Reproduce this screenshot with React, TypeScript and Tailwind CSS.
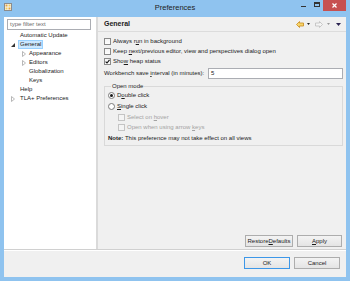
import React from 'react';

type Level = 0 | 1;

interface TreeItem {
  label: string;
  level: Level;
  arrow?: 'open' | 'closed';
  selected?: boolean;
}

const tree: TreeItem[] = [
  { label: 'Automatic Update', level: 0 },
  { label: 'General', level: 0, arrow: 'open', selected: true },
  { label: 'Appearance', level: 1, arrow: 'closed' },
  { label: 'Editors', level: 1, arrow: 'closed' },
  { label: 'Globalization', level: 1 },
  { label: 'Keys', level: 1 },
  { label: 'Help', level: 0 },
  { label: 'TLA+ Preferences', level: 0, arrow: 'closed' },
];

function Checkbox({ checked, disabled }: { checked?: boolean; disabled?: boolean }) {
  return (
    <span
      className={`w-[7px] h-[7px] shrink-0 border flex items-center justify-center ${
        disabled ? 'border-[#c4c4c4] bg-[#f4f4f4]' : 'border-[#8a8a8a] bg-gradient-to-b from-[#f4f4f4] to-white'
      }`}
    >
      {checked && (
        <svg width="5" height="5" viewBox="0 0 5 5">
          <path d="M0.6 2.6 L2 4 L4.5 0.8" stroke="#111" strokeWidth="1.1" fill="none" />
        </svg>
      )}
    </span>
  );
}

function Radio({ checked }: { checked?: boolean }) {
  return (
    <span className="w-[7px] h-[7px] shrink-0 rounded-full border border-[#7a7a7a] bg-white flex items-center justify-center">
      {checked && <span className="w-[3px] h-[3px] rounded-full bg-[#1a1a1a]" />}
    </span>
  );
}

function Btn({ children, className = '', isDefault }: { children: React.ReactNode; className?: string; isDefault?: boolean }) {
  return (
    <div
      className={`h-[12px] flex items-center justify-center text-[6px] bg-gradient-to-b from-[#f3f3f3] to-[#e4e4e4] border ${
        isDefault ? 'border-[#3d97e8]' : 'border-[#adadad]'
      } ${className}`}
    >
      {children}
    </div>
  );
}

function TitleBar() {
  return (
    <div className="h-[17px] grid grid-cols-[1fr_auto_1fr] items-start">
      <div className="pl-[4px] pt-[3px]">
        {/* eclipse prefs icon */}
        <svg width="8" height="8" viewBox="0 0 8 8">
          <rect x="0.5" y="0.5" width="7" height="7" fill="#f4f4f4" stroke="#8c8c8c" />
          <rect x="1.5" y="1.5" width="2" height="2" fill="#e8a33c" />
          <rect x="4.5" y="1.5" width="2" height="2" fill="#f3cf5a" />
          <rect x="1.5" y="4.5" width="2" height="2" fill="#f3cf5a" />
          <rect x="4.5" y="4.5" width="2" height="2" fill="#e8a33c" />
        </svg>
      </div>
      <div className="pt-[3px] text-[7.5px] leading-[10px] text-[#222]">Preferences</div>
      <div className="flex justify-end items-start pr-[4px]">
        <div className="w-[13px] h-[11px] flex items-center justify-center">
          <span className="w-[5px] h-[1px] bg-[#333] mt-[2px]" />
        </div>
        <div className="w-[13px] h-[11px] flex items-center justify-center">
          <span className="w-[6px] h-[5px] border border-[#333] border-t-2 -mt-[2px]" />
        </div>
        <div className="w-[23px] h-[11px] bg-[#c75050] flex items-center justify-center">
          <svg width="5" height="5" viewBox="0 0 5 5">
            <path d="M0.5 0.5 L4.5 4.5 M4.5 0.5 L0.5 4.5" stroke="#fff" strokeWidth="1.2" />
          </svg>
        </div>
      </div>
    </div>
  );
}

function Sidebar() {
  return (
    <div className="w-[94px] bg-white border-r-[2px] border-[#dadada] pt-[2px] pl-[3px]">
      <div className="w-[84px] h-[11px] border border-[#abadb3] flex items-center pl-[2px] text-[6px] text-[#6d6d6d]">
        type filter text
      </div>
      <div className="mt-[1px]">
        {tree.map((t) => (
          <div key={t.label} className={`h-[9px] flex items-center ${t.level === 0 ? 'pl-[4px]' : 'pl-[15px]'}`}>
            <span className={`${t.level === 0 ? 'w-[7px]' : 'w-[5px]'} h-[9px] flex items-center`}>
              {t.arrow === 'open' && (
                <svg width="4" height="4" viewBox="0 0 4 4">
                  <polygon points="4,0 4,4 0,4" fill="#333" />
                </svg>
              )}
              {t.arrow === 'closed' && (
                <svg width="4" height="6" viewBox="0 0 4 6">
                  <polygon points="0.5,0.5 3.5,3 0.5,5.5" fill="none" stroke="#a6a6a6" strokeWidth="0.8" />
                </svg>
              )}
            </span>
            <span
              className={`h-[9px] px-[1px] border flex items-center text-[6px] ${
                t.selected ? 'bg-[#cce8ff] border-[#99d1ff]' : 'border-transparent'
              }`}
            >
              {t.label}
            </span>
          </div>
        ))}
      </div>
    </div>
  );
}

function PrefPage() {
  return (
    <div className="flex-1 flex flex-col">
      <div className="h-[15px] border-b border-[#dcdcdc] flex items-center pl-[6px] pr-[5px]">
        <span className="text-[7px] font-bold">General</span>
        <div className="ml-auto flex items-center">
          <svg width="8" height="7" viewBox="0 0 8 7">
            <path d="M0.5 3.5 L3.5 0.5 L3.5 2 L7.5 2 L7.5 5 L3.5 5 L3.5 6.5 Z" fill="#f7d56a" stroke="#c98a1c" strokeWidth="0.8" />
          </svg>
          <svg className="ml-[3px]" width="3" height="2" viewBox="0 0 3 2">
            <polygon points="0,0 3,0 1.5,2" fill="#222" />
          </svg>
          <svg className="ml-[5px]" width="8" height="7" viewBox="0 0 8 7">
            <path d="M7.5 3.5 L4.5 0.5 L4.5 2 L0.5 2 L0.5 5 L4.5 5 L4.5 6.5 Z" fill="#f4f4f4" stroke="#bdbdbd" strokeWidth="0.8" />
          </svg>
          <svg className="ml-[4px]" width="3" height="2" viewBox="0 0 3 2">
            <polygon points="0,0 3,0 1.5,2" fill="#9a9a9a" />
          </svg>
          <svg className="ml-[6px]" width="5" height="3" viewBox="0 0 5 3">
            <polygon points="0,0 5,0 2.5,3" fill="#2a2350" />
          </svg>
        </div>
      </div>

      <div className="pl-[6px] pr-[3px] pt-[4px] text-[6px]">
        <div className="h-[10px] flex items-center gap-[2px]">
          <Checkbox />
          <span>Always r<u>u</u>n in background</span>
        </div>
        <div className="h-[10px] flex items-center gap-[2px]">
          <Checkbox />
          <span>Keep <u>n</u>ext/previous editor, view and perspectives dialog open</span>
        </div>
        <div className="h-[10px] flex items-center gap-[2px]">
          <Checkbox checked />
          <span>Sho<u>w</u> heap status</span>
        </div>
        <div className="h-[11px] mt-[2px] flex items-center">
          <span>Workbench save <u>i</u>nterval (in minutes):</span>
          <div className="ml-auto w-[135px] h-[11px] border border-[#abadb3] bg-white flex items-center pl-[2px]">5</div>
        </div>

        <fieldset className="mt-[3px] border border-[#d9d9d9] pl-[3px] pb-[1px]">
          <legend className="ml-[3px] px-[1px] leading-[8px]">Open mode</legend>
          <div className="h-[11px] flex items-center gap-[2px]">
            <Radio checked />
            <span>D<u>o</u>uble click</span>
          </div>
          <div className="h-[11px] flex items-center gap-[2px]">
            <Radio />
            <span><u>S</u>ingle click</span>
          </div>
          <div className="h-[10px] flex items-center gap-[2px] pl-[10px] text-[#a3a3a3]">
            <Checkbox disabled />
            <span>Select on <u>h</u>over</span>
          </div>
          <div className="h-[11px] flex items-center gap-[2px] pl-[10px] text-[#a3a3a3]">
            <Checkbox disabled />
            <span>Open when using arrow <u>k</u>eys</span>
          </div>
          <div className="h-[11px] flex items-center">
            <span>
              <b>Note:</b> This preference may not take effect on all views
            </span>
          </div>
        </fieldset>
      </div>

      <div className="mt-auto flex justify-end gap-[4px] pr-[4px] pb-[2px]">
        <Btn className="w-[48px] h-[11px]">
          Restore <u>D</u>efaults
        </Btn>
        <Btn className="w-[45px] h-[11px]">
          <u>A</u>pply
        </Btn>
      </div>
    </div>
  );
}

export default function App() {
  return (
    <div className="w-[350px] h-[281px] bg-[#8fc3ef] flex flex-col overflow-hidden font-['Liberation_Sans',Arial,sans-serif] text-[#1b1b1b]">
      <TitleBar />
      <div className="flex-1 mx-[4px] mb-[4px] bg-[#f0f0f0] flex flex-col">
        <div className="h-[232px] flex">
          <Sidebar />
          <PrefPage />
        </div>
        <div className="h-px bg-[#d0d0d0]" />
        <div className="h-px bg-white" />
        <div className="flex-1 flex justify-end items-start pt-[6px] pr-[6px] gap-[4px]">
          <Btn className="w-[46px]" isDefault>
            OK
          </Btn>
          <Btn className="w-[46px]">Cancel</Btn>
        </div>
      </div>
    </div>
  );
}
